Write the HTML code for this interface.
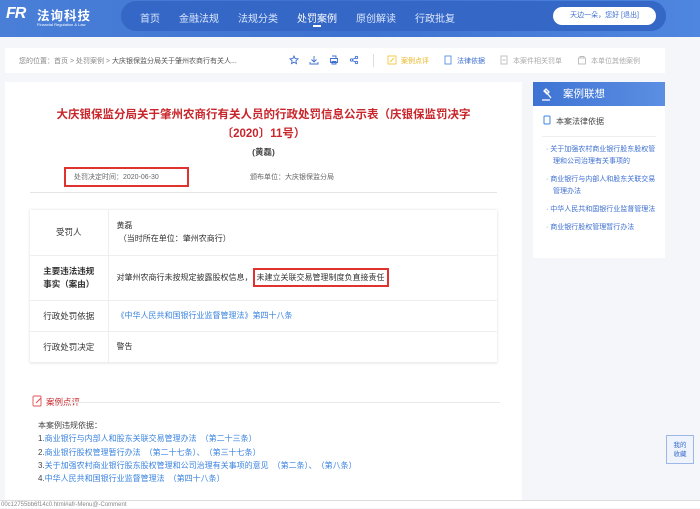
<!DOCTYPE html>
<html><head><meta charset="utf-8"><style>
*{margin:0;padding:0;box-sizing:border-box}
body{width:700px;height:508px;overflow:hidden;background:#f4f6fa;font-family:"Liberation Sans","Noto Sans CJK SC",sans-serif;font-size:8px;color:#333;position:relative}
.hdr{position:absolute;left:0;top:0;width:700px;height:37px;background:linear-gradient(90deg,#4a7fd8,#3d72d0 50%,#4f86df);}
.logo{position:absolute;left:6px;top:5px;color:#fff}
.logo b{font-size:16px;font-style:italic;font-family:"Liberation Sans",sans-serif;letter-spacing:-1px}
.logo .cn{position:absolute;left:31px;top:0;font-size:12.5px;font-weight:bold;white-space:nowrap;letter-spacing:1px}
.logo .en{position:absolute;left:31px;top:17px;font-size:4px;white-space:nowrap}
.nav{position:absolute;left:121px;top:1px;width:545px;height:30px;border-radius:15px;background:#3467c6}
.nav span{position:absolute;top:9px;color:#dbe6fb;font-size:10px;white-space:nowrap}
.nav .on{color:#fff}
.user{position:absolute;left:432px;top:6px;width:103px;height:18px;border-radius:9px;background:#fff;color:#3d6fd0;font-size:7px;line-height:18px;text-align:center}
.crumb{position:absolute;left:5px;top:48px;width:660px;height:25px;background:#fff}
.crumb .t{position:absolute;left:14px;top:8px;color:#888;font-size:7px;white-space:nowrap}
.ic{position:absolute;top:7px;width:10px;height:10px}
.main{position:absolute;left:5px;top:82px;width:517px;height:418px;background:#fff}
.side{position:absolute;left:533px;top:82px;width:132px;height:176px;background:#fff}
.side .h{height:24px;background:linear-gradient(90deg,#3f73d3,#5b8fe3);color:#fff;font-size:10.5px;line-height:24px;padding-left:30px}
.title{position:absolute;left:0;width:517px;text-align:center;color:#c8262b;font-size:11.5px;font-weight:bold}
table{position:absolute;left:25px;top:128px;width:467px;border-collapse:collapse;box-shadow:0 0 3px #ddd}
td{border-bottom:1px solid #eee;font-size:8px;padding:0 8px}
td.k{width:78px;text-align:center;border-right:1px solid #eee;font-size:8.5px;color:#333}
.lnk{color:#3b84e0}
.list{position:absolute;left:33px;top:337px;font-size:8px;line-height:13.3px;color:#444}
</style></head><body>
<div class="hdr">
 <div class="logo"><b>FR</b><span class="cn">法询科技</span><span class="en">Financial Regulation &amp; Law</span></div>
 <div class="nav">
  <span style="left:19px">首页</span><span style="left:58px">金融法规</span><span style="left:117px">法规分类</span>
  <span class="on" style="left:176px">处罚案例</span><div style="position:absolute;left:192px;top:24px;width:8px;height:1.5px;background:#fff"></div>
  <span style="left:235px">原创解读</span><span style="left:294px">行政批复</span>
  <div class="user">天边一朵，您好 [退出]</div>
 </div>
</div>
<div class="crumb">
 <div class="t">您的位置：首页 &gt; 处罚案例 &gt; <span style="color:#555">大庆银保监分局关于肇州农商行有关人...</span></div>
 <svg class="ic" style="left:284px" viewBox="0 0 10 10"><path d="M5 1l1.2 2.6 2.8.3-2.1 1.9.6 2.8L5 7.2 2.5 8.6l.6-2.8L1 3.9l2.8-.3z" fill="none" stroke="#3d6fd0" stroke-width=".9"/></svg>
 <svg class="ic" style="left:304px" viewBox="0 0 10 10"><path d="M5 1v6M2.5 4.5L5 7l2.5-2.5M1 7v2h8V7" fill="none" stroke="#3d6fd0" stroke-width=".9"/></svg>
 <svg class="ic" style="left:324px" viewBox="0 0 10 10"><path d="M3 1h4v2.5M1.5 3.5h7v4h-7zM3 6.5h4v2.5H3z" fill="none" stroke="#3d6fd0" stroke-width=".9"/></svg>
 <svg class="ic" style="left:344px" viewBox="0 0 10 10"><circle cx="7.5" cy="2.5" r="1.2" fill="none" stroke="#3d6fd0" stroke-width=".9"/><circle cx="2.5" cy="5" r="1.2" fill="none" stroke="#3d6fd0" stroke-width=".9"/><circle cx="7.5" cy="7.5" r="1.2" fill="none" stroke="#3d6fd0" stroke-width=".9"/><path d="M3.5 4.4l3-1.4M3.5 5.6l3 1.4" stroke="#3d6fd0" stroke-width=".9"/></svg>
 <div style="position:absolute;left:368px;top:6px;width:1px;height:13px;background:#ddd"></div>
 <svg class="ic" style="left:382px" viewBox="0 0 10 10"><rect x="1" y="1" width="8" height="8" fill="none" stroke="#f5c842" stroke-width=".9"/><path d="M3 7l4-4" stroke="#f5c842"/></svg>
 <span style="position:absolute;left:396px;top:8px;color:#e8b520;font-size:7px">案例点评</span>
 <svg class="ic" style="left:438px" viewBox="0 0 10 10"><rect x="2" y="1" width="6" height="8" fill="none" stroke="#5a90e0" stroke-width=".9"/></svg>
 <span style="position:absolute;left:452px;top:8px;color:#3d6fd0;font-size:7px">法律依据</span>
 <svg class="ic" style="left:494px" viewBox="0 0 10 10"><rect x="2" y="1" width="6" height="8" fill="none" stroke="#bbb" stroke-width=".9"/><path d="M3.5 5h3" stroke="#bbb"/></svg>
 <span style="position:absolute;left:508px;top:8px;color:#aaa;font-size:7px">本案件相关罚单</span>
 <svg class="ic" style="left:572px" viewBox="0 0 10 10"><rect x="1.5" y="3" width="7" height="6" fill="none" stroke="#bbb" stroke-width=".9"/><path d="M3 3V1.5h4V3" fill="none" stroke="#bbb"/></svg>
 <span style="position:absolute;left:586px;top:8px;color:#aaa;font-size:7px">本单位其他案例</span>
</div>
<div class="main">
 <div class="title" style="top:24px">大庆银保监分局关于肇州农商行有关人员的行政处罚信息公示表（庆银保监罚决字</div>
 <div class="title" style="top:43px">〔2020〕11号）</div>
 <div style="position:absolute;left:0;width:517px;top:64px;text-align:center;font-size:8.5px;font-weight:bold;color:#444">(黄磊)</div>
 <div style="position:absolute;left:59px;top:85px;width:125px;height:20px;border:2px solid #e0322f"></div>
 <div style="position:absolute;left:69px;top:90px;font-size:7px;color:#666">处罚决定时间：2020-06-30</div>
 <div style="position:absolute;left:245px;top:90px;font-size:7px;color:#666">颁布单位：大庆银保监分局</div>
 <div style="position:absolute;left:25px;top:110px;width:467px;height:1px;background:#e5e5e5"></div>
 <table>
  <tr style="height:45px"><td class="k">受罚人</td><td style="line-height:13px">黄磊<br>&nbsp;（当时所在单位：肇州农商行）</td></tr>
  <tr style="height:45px"><td class="k" style="font-weight:bold;line-height:13px">主要违法违规<br>事实（案由）</td><td>对肇州农商行未按规定披露股权信息，<span style="border:2px solid #e0322f;padding:3px 2px">未建立关联交易管理制度负直接责任</span></td></tr>
  <tr style="height:31px"><td class="k">行政处罚依据</td><td class="lnk">《中华人民共和国银行业监督管理法》第四十八条</td></tr>
  <tr style="height:31px"><td class="k">行政处罚决定</td><td>警告</td></tr>
 </table>
 <svg style="position:absolute;left:27px;top:313px" width="11" height="12" viewBox="0 0 11 12"><rect x="1" y="1" width="8" height="10" rx="1" fill="none" stroke="#e05050" stroke-width=".9"/><path d="M4 8l5-5" stroke="#e05050"/></svg>
 <div style="position:absolute;left:41px;top:314px;color:#c8262b;font-size:8.5px">案例点评</div>
 <div style="position:absolute;left:63px;top:320px;width:432px;height:1px;background:#e8e8e8"></div>
 <div class="list">本案例违规依据：<br>1.<span class="lnk">商业银行与内部人和股东关联交易管理办法　（第二十三条）</span><br>2.<span class="lnk">商业银行股权管理暂行办法　（第二十七条）、　（第三十七条）</span><br>3.<span class="lnk">关于加强农村商业银行股东股权管理和公司治理有关事项的意见　（第二条）、　（第八条）</span><br>4.<span class="lnk">中华人民共和国银行业监督管理法　（第四十八条）</span></div>
</div>
<div class="side">
 <div class="h">案例联想</div>
 <svg style="position:absolute;left:8px;top:6px" width="14" height="13" viewBox="0 0 14 13"><path d="M3 2l4 4M5 1l3 3-2 2-3-3zM6 5l4 5M1 12h8" stroke="#fff" stroke-width="1.3" fill="none"/></svg>
 <svg style="position:absolute;left:10px;top:33px" width="8" height="10"><rect x="1" y="1" width="6" height="8" rx="1" fill="none" stroke="#3d84e0"/></svg>
 <div style="position:absolute;left:23px;top:34px;font-size:8px;color:#444">本案法律依据</div>
 <div style="position:absolute;left:9px;top:54px;width:114px;height:1px;background:#eee"></div>
 <div style="position:absolute;left:10px;top:62px;width:118px;font-size:7px;line-height:12px;color:#3d6fd0">
  <div style="padding-left:10px;text-indent:-7px">· 关于加强农村商业银行股东股权管理和公司治理有关事项的</div>
  <div style="padding-left:10px;text-indent:-7px;margin-top:6px">· 商业银行与内部人和股东关联交易管理办法</div>
  <div style="padding-left:10px;text-indent:-7px;margin-top:6px">· 中华人民共和国银行业监督管理法</div>
  <div style="padding-left:10px;text-indent:-7px;margin-top:6px">· 商业银行股权管理暂行办法</div>
 </div>
</div>
<div style="position:absolute;left:666px;top:435px;width:28px;height:29px;border:1px solid #9db8e8;background:#eef3fc;color:#3d6fd0;font-size:6.5px;text-align:center;line-height:9px;padding-top:5px">我的<br>收藏</div>
<div style="position:absolute;left:0;top:500px;width:700px;height:8px;background:#fff;border-top:1px solid #ddd;font-size:6px;color:#888;padding-left:1px;line-height:8px">00c12755bb6f14c0.html#afr-Menu@-Comment</div>
</body></html>
